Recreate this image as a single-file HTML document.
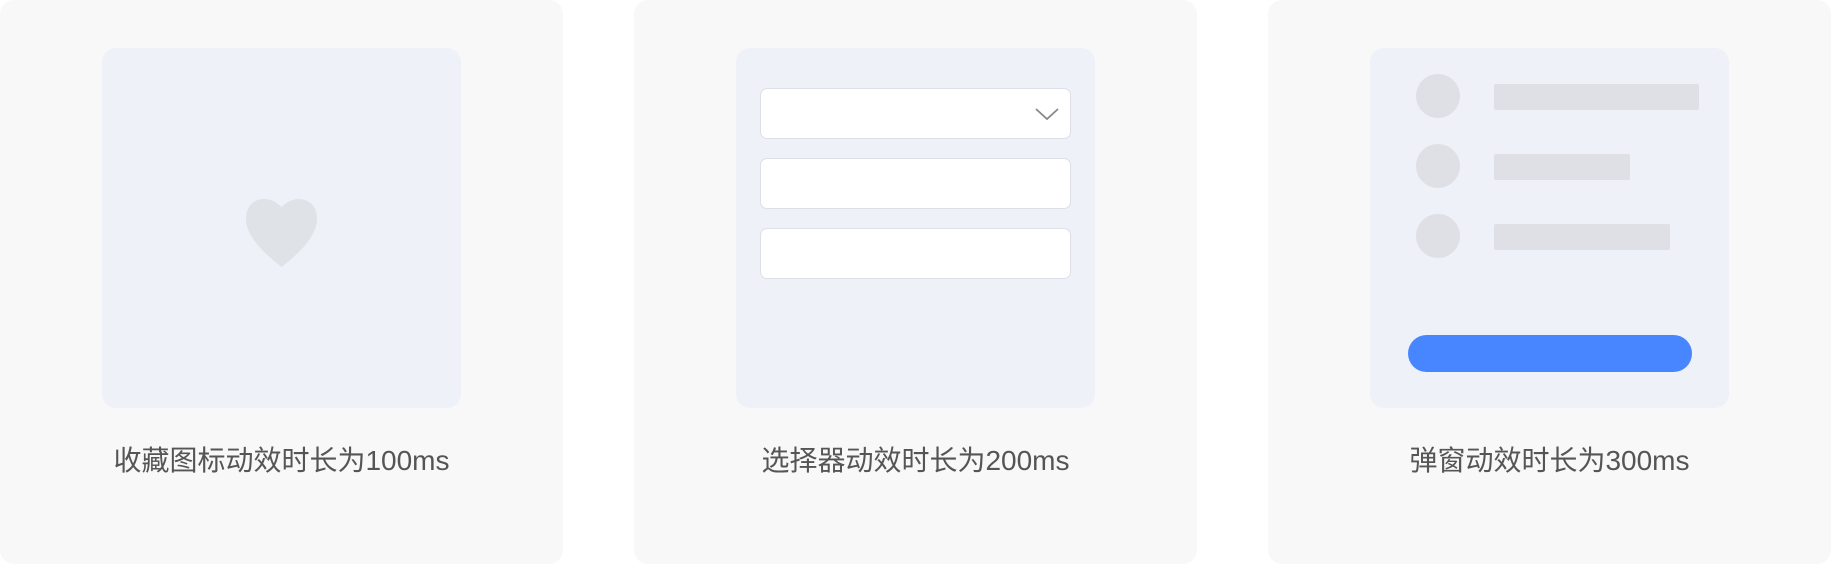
<!DOCTYPE html>
<html><head><meta charset="utf-8"><style>
*{margin:0;padding:0;box-sizing:border-box}
body{width:1832px;height:564px;background:#fff;position:relative;overflow:hidden;font-family:"Liberation Sans","Noto Sans CJK SC",sans-serif}
.card{position:absolute;top:0;width:563px;height:564px;background:#f8f8f8;border-radius:14px}
.inner{position:absolute;left:102px;top:48px;width:359px;height:360px;background:#eef1f8;border-radius:14px}
.lbl{position:absolute;left:0;width:563px;top:443px;text-align:center;font-size:28px;color:#555;line-height:36px}
.inp{position:absolute;left:24px;width:311px;height:51px;background:#fff;border:1px solid #dcdfe6;border-radius:7px}
.c{position:absolute;left:46px;width:44px;height:44px;border-radius:50%;background:#dfe0e5}
.b{position:absolute;left:124px;height:26px;background:#dfe0e5;border-radius:2px}
</style></head><body>
<div class="card" style="left:0">
 <div class="inner">
  <svg style="position:absolute;left:144px;top:151px" width="71" height="68" viewBox="0 0 71 68"><path d="M35.5 68 C20 56 0 38 0 20 C0 6 9 0 18 0 C26 0 31 4 35.5 8 C40 4 45 0 53 0 C62 0 71 6 71 20 C71 38 51 56 35.5 68Z" fill="#dfe2e6"/></svg>
 </div>
 <div class="lbl">收藏图标动效时长为100ms</div>
</div>
<div class="card" style="left:634px">
 <div class="inner">
  <div class="inp" style="top:40px"><svg style="position:absolute;left:274px;top:19px" width="24" height="13" viewBox="0 0 24 13"><path d="M1 1 L12 11 L23 1" fill="none" stroke="#888" stroke-width="1.8"/></svg></div>
  <div class="inp" style="top:110px"></div>
  <div class="inp" style="top:180px"></div>
 </div>
 <div class="lbl">选择器动效时长为200ms</div>
</div>
<div class="card" style="left:1268px">
 <div class="inner">
  <div class="c" style="top:26px"></div><div class="b" style="top:36px;width:205px"></div>
  <div class="c" style="top:96px"></div><div class="b" style="top:106px;width:136px"></div>
  <div class="c" style="top:166px"></div><div class="b" style="top:176px;width:176px"></div>
  <div style="position:absolute;left:38px;top:287px;width:284px;height:37px;border-radius:19px;background:#4886ff"></div>
 </div>
 <div class="lbl">弹窗动效时长为300ms</div>
</div>
</body></html>
